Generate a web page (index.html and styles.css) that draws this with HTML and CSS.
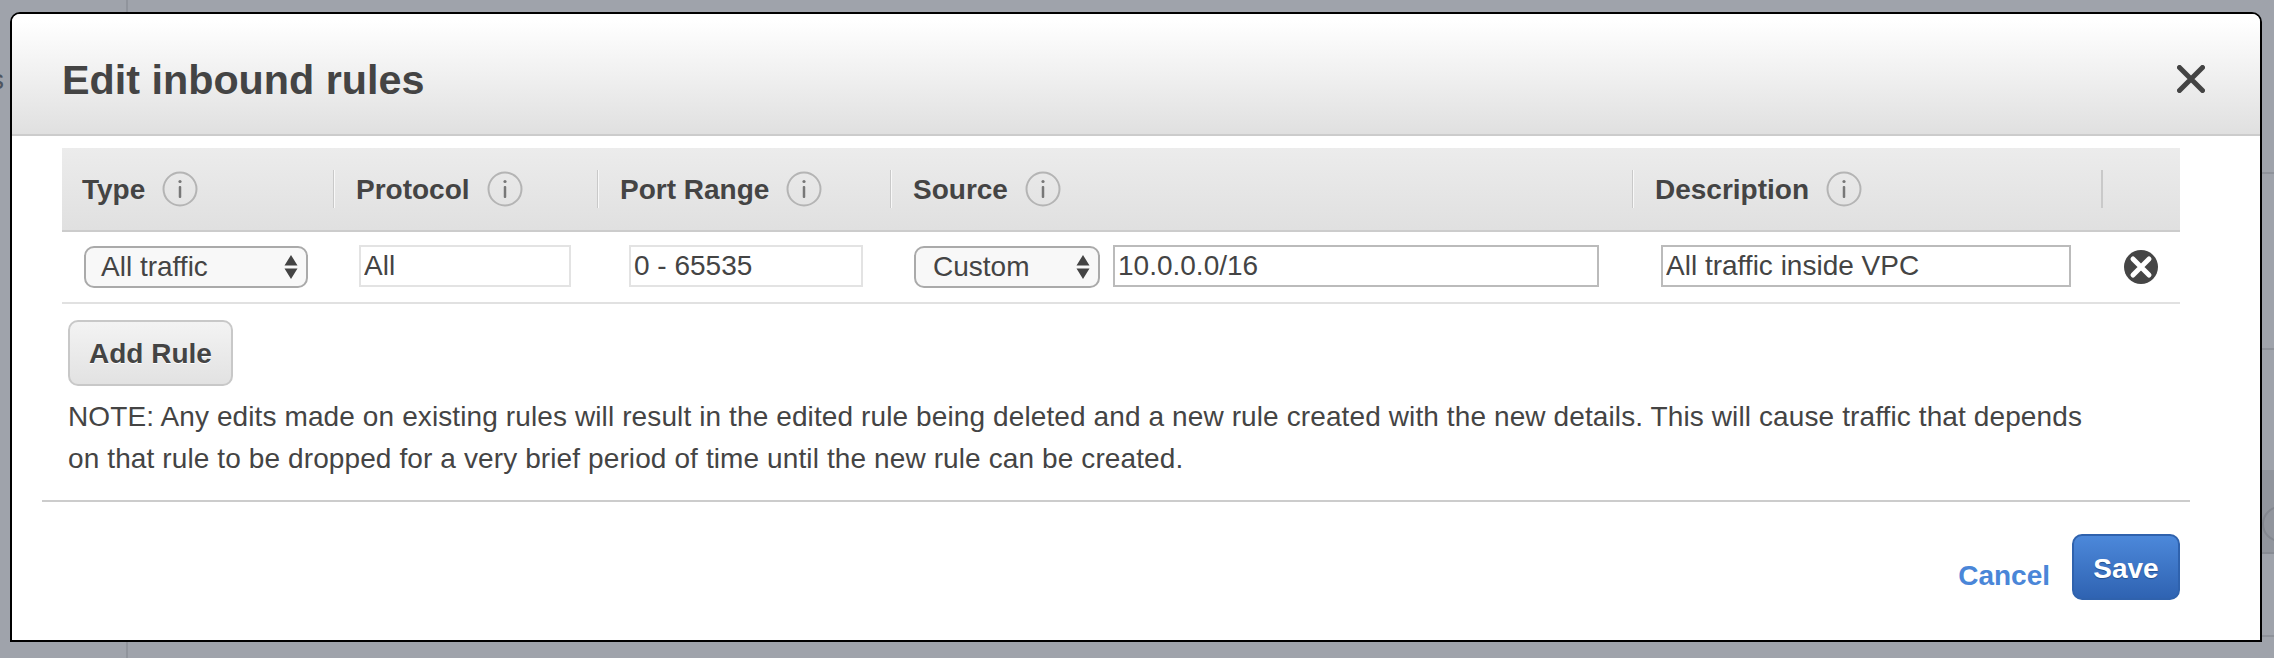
FILE: index.html
```html
<!DOCTYPE html>
<html lang="en">
<head>
<meta charset="utf-8">
<title>Edit inbound rules</title>
<link rel="stylesheet" href="styles.css">
</head>
<body>
<div class="backdrop-line backdrop-line-v"></div>
<div class="backdrop-letter">s</div>
<div class="backdrop-right">
  <div class="bg-rule bg-rule-a"></div>
  <div class="bg-rule bg-rule-b"></div>
  <div class="bg-band"><div class="bg-ring"></div></div>
  <div class="bg-rule bg-rule-c"></div>
</div>
<section class="modal">
  <header class="modal-head">
    <h1 class="modal-title">Edit inbound rules</h1>
    <button class="close" aria-label="Close">
      <svg width="28" height="28" viewBox="0 0 28 28"><path d="M2.5 2.5 25.5 25.5M25.5 2.5 2.5 25.5" stroke="#444" stroke-width="5" stroke-linecap="round" fill="none"/></svg>
    </button>
  </header>
  <div class="rules">
    <div class="rules-grid rules-header">
      <div class="th th-first"><span class="th-label">Type</span><svg class="info" width="36" height="36" viewBox="0 0 36 36"><circle cx="18" cy="18" r="16.500" fill="none" stroke="#b4b4b4" stroke-width="2"/><rect x="16.75" y="15" width="2.500" height="12" rx="1" fill="#777"/><circle cx="18" cy="10.500" r="1.600" fill="#777"/></svg></div>
      <div class="th"><span class="th-label">Protocol</span><svg class="info" width="36" height="36" viewBox="0 0 36 36"><circle cx="18" cy="18" r="16.500" fill="none" stroke="#b4b4b4" stroke-width="2"/><rect x="16.75" y="15" width="2.500" height="12" rx="1" fill="#777"/><circle cx="18" cy="10.500" r="1.600" fill="#777"/></svg></div>
      <div class="th"><span class="th-label">Port Range</span><svg class="info" width="36" height="36" viewBox="0 0 36 36"><circle cx="18" cy="18" r="16.500" fill="none" stroke="#b4b4b4" stroke-width="2"/><rect x="16.75" y="15" width="2.500" height="12" rx="1" fill="#777"/><circle cx="18" cy="10.500" r="1.600" fill="#777"/></svg></div>
      <div class="th"><span class="th-label">Source</span><svg class="info" width="36" height="36" viewBox="0 0 36 36"><circle cx="18" cy="18" r="16.500" fill="none" stroke="#b4b4b4" stroke-width="2"/><rect x="16.75" y="15" width="2.500" height="12" rx="1" fill="#777"/><circle cx="18" cy="10.500" r="1.600" fill="#777"/></svg></div>
      <div class="th"><span class="th-label">Description</span><svg class="info" width="36" height="36" viewBox="0 0 36 36"><circle cx="18" cy="18" r="16.500" fill="none" stroke="#b4b4b4" stroke-width="2"/><rect x="16.75" y="15" width="2.500" height="12" rx="1" fill="#777"/><circle cx="18" cy="10.500" r="1.600" fill="#777"/></svg></div>
      <div class="th th-last"></div>
    </div>
    <div class="rules-grid rules-row">
      <div class="td td-type">
        <div class="select select-type"><span>All traffic</span>
          <svg class="updown" width="14" height="24" viewBox="0 0 14 24"><path d="M7 0 13.500 10.500H.5ZM7 24 .5 13.500H13.500Z" fill="#444"/></svg>
        </div>
      </div>
      <div class="td td-protocol"><input class="field field-off field-protocol" value="All" readonly></div>
      <div class="td td-port"><input class="field field-off field-port" value="0 - 65535" readonly></div>
      <div class="td td-source">
        <div class="select select-source"><span>Custom</span>
          <svg class="updown" width="14" height="24" viewBox="0 0 14 24"><path d="M7 0 13.500 10.500H.5ZM7 24 .5 13.500H13.500Z" fill="#444"/></svg>
        </div>
        <input class="field field-cidr" value="10.0.0.0/16">
      </div>
      <div class="td td-desc"><input class="field field-desc" value="All traffic inside VPC"></div>
      <div class="td td-del">
        <svg width="36" height="36" viewBox="0 0 36 36"><circle cx="18" cy="18" r="17" fill="#454545"/><path d="M10 10 26 26M26 10 10 26" stroke="#fff" stroke-width="5" stroke-linecap="round" fill="none"/></svg>
      </div>
    </div>
  </div>
  <button class="add-rule">Add Rule</button>
  <p class="note">NOTE: Any edits made on existing rules will result in the edited rule being deleted and a new rule created with the new details. This will cause traffic that depends on that rule to be dropped for a very brief period of time until the new rule can be created.</p>
  <footer class="modal-foot">
    <a class="cancel" href="#">Cancel</a>
    <button class="save">Save</button>
  </footer>
</section>
</body>
</html>
```
FILE: styles.css
```css
* { box-sizing: border-box; }
html, body { margin: 0; height: 658px; overflow: hidden; }
body {
  background: #9fa3ab;
  padding: 12px 12px 16px 10px;
  font-family: "Liberation Sans", Arial, sans-serif;
  font-size: 28px;
  color: #444;
  position: relative;
}
.backdrop-line-v { position: absolute; left: 126px; top: 0; width: 2px; height: 658px; background: #90949c; }
.backdrop-letter { position: absolute; left: -10px; top: 64px; font-size: 28px; color: #4e5560; }
.backdrop-right { position: absolute; left: 2262px; top: 0; width: 12px; height: 658px; }
.bg-rule { position: absolute; left: 0; width: 12px; height: 2px; background: #8e929a; }
.bg-rule-a { top: 172px; }
.bg-rule-b { top: 348px; }
.bg-rule-c { top: 635px; }
.bg-band { position: absolute; left: 0; top: 470px; width: 12px; height: 84px; background: #91959d; border-bottom: 2px solid #878b93; overflow: hidden; }
.bg-ring { position: absolute; left: 0; top: 36px; width: 36px; height: 36px; border: 2px solid #83878f; border-radius: 50%; }

.modal {
  position: relative;
  width: 2252px;
  height: 630px;
  background: #fff;
  border: 2px solid #000;
  border-radius: 10px 10px 0 0;
  overflow: hidden;
}
.modal-head {
  height: 122px;
  border-bottom: 2px solid #ccc;
  background: linear-gradient(#fff 5%, #e0e0e0);
  display: flex;
  align-items: center;
  justify-content: space-between;
  padding: 12px 55px 0 50px;
}
.modal-title { margin: 0; font-size: 41.3px; font-weight: 700; color: #444; }
.close { border: 0; padding: 0; background: none; display: flex; margin-top: -2px; }

.rules { margin: 12px 0 0 50px; width: 2118px; }
.rules-grid { display: grid; grid-template-columns: 272px 264px 293px 742px 469px 78px; }
.rules-header {
  height: 84px;
  background: linear-gradient(#ececec, #e0e0e0);
  border-bottom: 2px solid #ccc;
  align-items: center;
}
.th {
  height: 38px;
  display: flex;
  align-items: center;
  gap: 17px;
  padding-left: 22px;
  border-right: 1px solid #c9c9c9;
  box-shadow: 1px 0 0 #f8f8f8;
  font-weight: 700;
  line-height: 40px;
}
.th-label { padding-top: 2px; }
.th-first { padding-left: 20px; }
.th-last { border-right: 0; box-shadow: inset 1px 0 0 #c9c9c9; }
.info { flex: none; }
.rules-row { height: 72px; border-bottom: 2px solid #e1e1e1; align-items: center; padding-bottom: 2px; }
.td { display: flex; align-items: center; }
.td-type { padding-left: 22px; }
.td-protocol { padding-left: 25px; }
.td-port { padding-left: 31px; }
.td-source { padding-left: 23px; gap: 13px; }
.td-desc { padding-left: 28px; }
.td-del { padding-left: 21px; padding-top: 2px; }

.select {
  position: relative;
  height: 42px;
  margin-top: 2px;
  background: #f8f8f8;
  border: 2px solid #aaa;
  border-radius: 10px;
  line-height: 38px;
  padding-left: 15px;
}
.select-type { width: 224px; }
.select-source { width: 186px; padding-left: 17px; }
.updown { position: absolute; right: 8px; top: 7px; }
.field {
  height: 42px;
  font: inherit;
  color: #444;
  background: #fff;
  border: 2px solid #bbb;
  padding: 0 3px;
  outline: 0;
  border-radius: 0;
}
.field-off { border-color: #e3e3e3; }
.field-protocol { width: 212px; }
.field-port { width: 234px; }
.field-cidr { width: 486px; }
.field-desc { width: 410px; }

.add-rule {
  display: block;
  margin: 16px 0 0 56px;
  width: 165px;
  height: 66px;
  padding: 2px 0 0;
  font: 700 28px "Liberation Sans", Arial, sans-serif;
  color: #444;
  text-shadow: 0 1px 0 #fff;
  background: linear-gradient(#f3f3f3, #e2e2e2);
  border: 2px solid #c8c8c8;
  border-radius: 10px;
}
.note { margin: 10px 0 0 56px; width: 2040px; line-height: 42px; font-size: 28px; letter-spacing: 0.11px; color: #444; }
.modal-foot {
  margin: 20px 70px 0 30px;
  height: 100px;
  border-top: 2px solid #ccc;
  display: flex;
  justify-content: flex-end;
  align-items: flex-start;
  padding: 32px 10px 0 0;
  gap: 22px;
}
.cancel { color: #4a86d8; font-weight: 700; text-decoration: none; line-height: 32px; margin-top: 26px; }
.save {
  width: 108px;
  height: 66px;
  padding: 3px 0 0;
  font: 700 28px "Liberation Sans", Arial, sans-serif;
  color: #fff;
  text-shadow: 0 1px 1px #234d8c;
  background: linear-gradient(#4c88da, #2f63b2);
  border: 2px solid #2f62ad;
  border-radius: 10px;
}
```
